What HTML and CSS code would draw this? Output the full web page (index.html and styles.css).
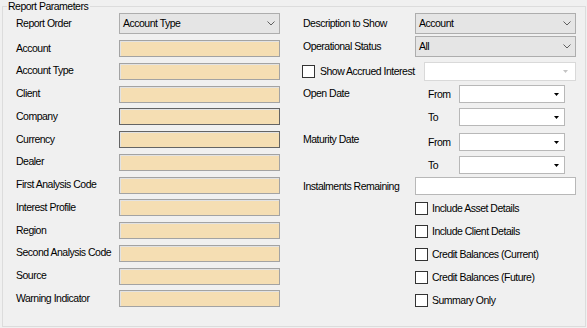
FILE: index.html
```html
<!DOCTYPE html>
<html lang="en">
<head>
  <meta charset="UTF-8" />
  <title>Report Parameters</title>
  <link rel="stylesheet" href="styles.css">
</head>
<body>

  <div class="group">
    <div class="group-title">Report Parameters</div>

    <div class="group-body">
      <!-- left column: filters -->
      <div class="col-left">
        <div class="row row-combo">
          <span class="lbl">Report Order</span>
          <div class="combo">
            <span>Account Type</span>
            <svg class="chev" width="8" height="5" viewBox="0 0 8 5"><polyline points="0.5,0.5 4,4 7.5,0.5" /></svg>
          </div>
        </div>

        <div class="fields">
          <div class="row"><span class="lbl">Account</span><div class="txt"></div></div>
          <div class="row"><span class="lbl">Account Type</span><div class="txt"></div></div>
          <div class="row"><span class="lbl">Client</span><div class="txt"></div></div>
          <div class="row"><span class="lbl">Company</span><div class="txt txt-dark"></div></div>
          <div class="row"><span class="lbl">Currency</span><div class="txt txt-dark"></div></div>
          <div class="row"><span class="lbl">Dealer</span><div class="txt"></div></div>
          <div class="row"><span class="lbl">First Analysis Code</span><div class="txt"></div></div>
          <div class="row"><span class="lbl">Interest Profile</span><div class="txt"></div></div>
          <div class="row"><span class="lbl">Region</span><div class="txt"></div></div>
          <div class="row"><span class="lbl">Second Analysis Code</span><div class="txt"></div></div>
          <div class="row"><span class="lbl">Source</span><div class="txt"></div></div>
          <div class="row"><span class="lbl">Warning Indicator</span><div class="txt"></div></div>
        </div>
      </div>

      <!-- right column: options -->
      <div class="col-right">
        <div class="row row-combo">
          <span class="lbl lbl-wide">Description to Show</span>
          <div class="combo">
            <span>Account</span>
            <svg class="chev" width="8" height="5" viewBox="0 0 8 5"><polyline points="0.5,0.5 4,4 7.5,0.5" /></svg>
          </div>
        </div>
        <div class="row row-combo row-status">
          <span class="lbl lbl-wide">Operational Status</span>
          <div class="combo">
            <span>All</span>
            <svg class="chev" width="8" height="5" viewBox="0 0 8 5"><polyline points="0.5,0.5 4,4 7.5,0.5" /></svg>
          </div>
        </div>
        <div class="row row-accrued">
          <label class="check check-accrued"><span class="box"></span>Show Accrued Interest</label>
          <div class="combo-off">
            <svg class="tri" width="5" height="3" viewBox="0 0 5 3"><polygon points="0,0 5,0 2.5,3" /></svg>
          </div>
        </div>

        <div class="dates dates-open">
          <span class="lbl dates-lbl">Open Date</span>
          <span class="from-to">From</span>
          <div class="date"><svg class="tri" width="5" height="3" viewBox="0 0 5 3"><polygon points="0,0 5,0 2.5,3" /></svg></div>
          <span class="from-to">To</span>
          <div class="date"><svg class="tri" width="5" height="3" viewBox="0 0 5 3"><polygon points="0,0 5,0 2.5,3" /></svg></div>
        </div>

        <div class="dates dates-maturity">
          <span class="lbl dates-lbl">Maturity Date</span>
          <span class="from-to">From</span>
          <div class="date"><svg class="tri" width="5" height="3" viewBox="0 0 5 3"><polygon points="0,0 5,0 2.5,3" /></svg></div>
          <span class="from-to">To</span>
          <div class="date"><svg class="tri" width="5" height="3" viewBox="0 0 5 3"><polygon points="0,0 5,0 2.5,3" /></svg></div>
        </div>

        <div class="row row-instal">
          <span class="lbl lbl-wide">Instalments Remaining</span>
          <div class="txt-white"></div>
        </div>

        <div class="checks">
          <label class="check"><span class="box"></span>Include Asset Details</label>
          <label class="check"><span class="box"></span>Include Client Details</label>
          <label class="check"><span class="box"></span>Credit Balances (Current)</label>
          <label class="check"><span class="box"></span>Credit Balances (Future)</label>
          <label class="check"><span class="box"></span>Summary Only</label>
        </div>
      </div>
    </div>
  </div>

</body>
</html>
```

FILE: styles.css
```css
/* --- base --- */
* {
  margin: 0;
  padding: 0;
  box-sizing: border-box;
}
body {
  font-family: 'Liberation Sans', Arial, sans-serif;
  font-size: 10.5px;
  letter-spacing: -0.5px;
  line-height: 13px;
  color: #000;
  background: #f0f0f0;
  width: 587px;
  height: 328px;
  overflow: hidden;
}

/* --- group box --- */
.group {
  margin: 6px 1px 0 2px;
  height: 321px;
  border: 1px solid #dcdcdc;
}
.group-title {
  width: fit-content;
  margin: -7px 0 0 4px;
  padding: 0 2px 0 1px;
  background: #f0f0f0;
}
.group-body {
  display: flex;
  padding-left: 13px;
}

/* --- common rows --- */
.row {
  display: flex;
  align-items: center;
}
.lbl {
  width: 103px;
  flex-shrink: 0;
  white-space: nowrap;
}
.lbl-wide {
  width: 112px;
}

/* --- combos --- */
.row-combo {
  height: 21px;
}
.combo {
  width: 161px;
  height: 21px;
  display: flex;
  align-items: center;
  justify-content: space-between;
  padding: 0 4px 0 3px;
  background: #e5e5e5;
  border: 1px solid #adadad;
}
.chev polyline {
  fill: none;
  stroke: #5f5f5f;
  stroke-width: 1;
}
.tri polygon {
  fill: #000;
}

/* --- left column --- */
.col-left {
  width: 264px;
}
.fields {
  display: grid;
  grid-auto-rows: 22.75px;
  margin-top: 6px;
}
.fields .row {
  height: 17px;
}
.fields .lbl {
  margin-top: -1px;
}
.txt {
  width: 161px;
  height: 17px;
  background: #f5deb3;
  border: 1px solid #a3a3a3;
  box-shadow: inset 1px 1px 0 #e2e2e2;
}
.txt-dark {
  border-color: #646464;
}

/* --- right column --- */
.col-right {
  margin-left: 23px;
  width: 273px;
}
.row-status {
  margin-top: 2px;
}
.row-accrued {
  margin-top: 5px;
  height: 19px;
  justify-content: space-between;
}
.check {
  display: flex;
  align-items: center;
  height: 13px;
  white-space: nowrap;
}
.check-accrued {
  margin-left: -1px;
}
.box {
  width: 13px;
  height: 13px;
  margin-right: 4px;
  background: #fff;
  border: 1px solid #333;
}
.check-accrued .box {
  margin-right: 5px;
}
.combo-off {
  width: 152px;
  height: 19px;
  display: flex;
  align-items: center;
  justify-content: flex-end;
  padding-right: 7px;
  background: #fff;
  border: 1px solid #d9d9d9;
}
.combo-off .tri polygon {
  fill: #c4c4c4;
}

/* --- date ranges --- */
.dates {
  display: grid;
  grid-template-columns: 112px 44px 106px;
  grid-auto-rows: 18px;
  row-gap: 5px;
  align-items: center;
}
.dates-open {
  margin-top: 4px;
}
.dates-maturity {
  margin-top: 7px;
}
.dates-lbl {
  grid-row: 1 / span 2;
  align-self: start;
  margin-top: 2px;
}
.dates-maturity .dates-lbl {
  margin-top: 0;
}
.from-to {
  padding-left: 13px;
}
.date {
  height: 18px;
  display: flex;
  align-items: center;
  justify-content: flex-end;
  padding-right: 5px;
  background: #fff;
  border: 1px solid #b8b8b8;
}

/* --- instalments & checkboxes --- */
.row-instal {
  margin-top: 3px;
  height: 18px;
}
.txt-white {
  width: 161px;
  height: 18px;
  background: #fff;
  border: 1px solid #b8b8b8;
}
.checks {
  margin: 7px 0 0 112px;
  display: flex;
  flex-direction: column;
  gap: 10px;
}
```
